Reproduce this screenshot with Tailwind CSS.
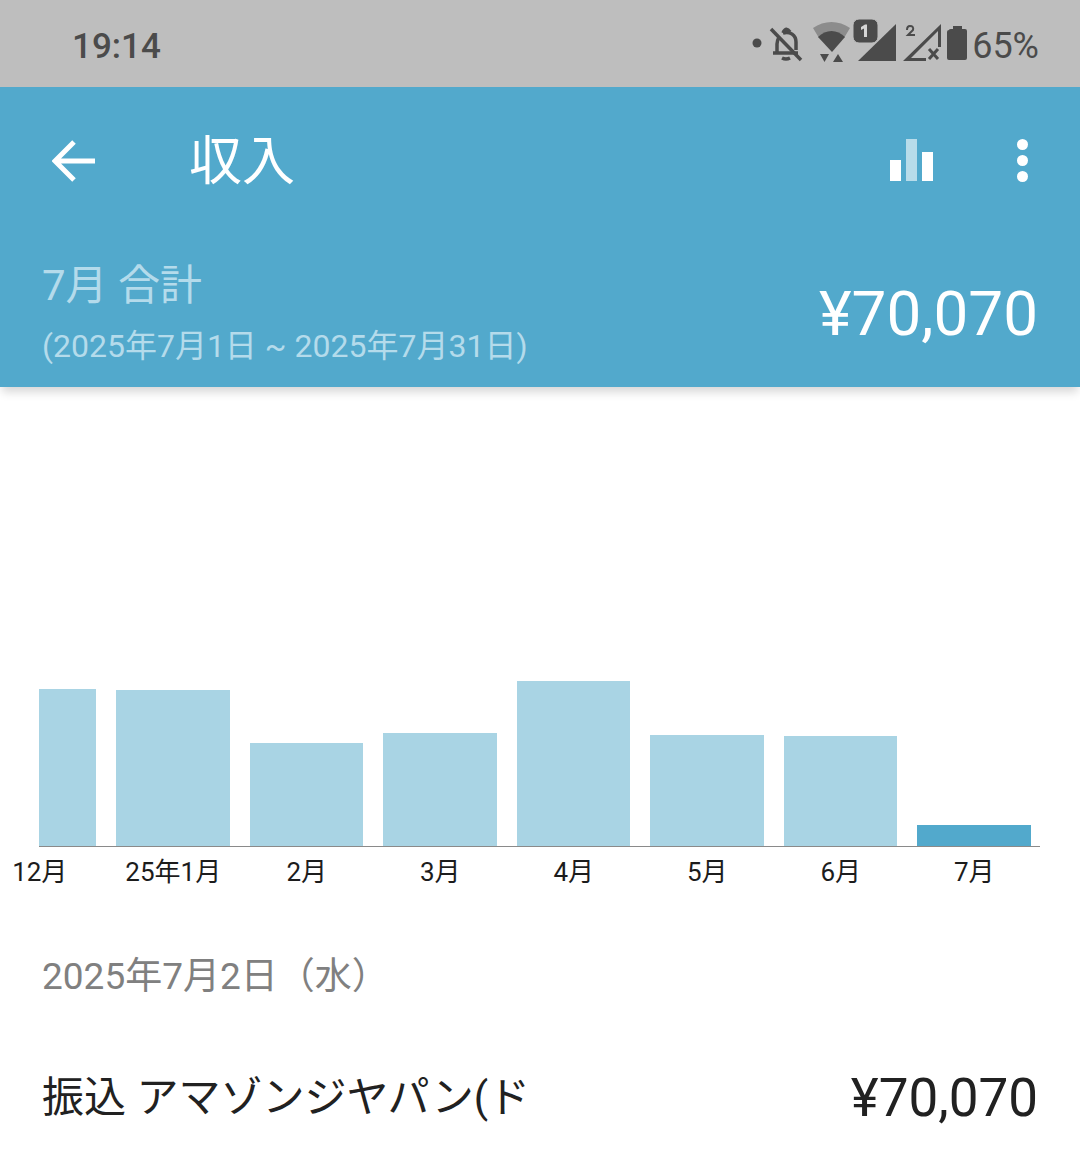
<!DOCTYPE html>
<html lang="ja">
<head>
  <meta charset="UTF-8">
  <meta name="viewport" content="width=device-width, initial-scale=1.0" />
  <title>収入</title>
  <script src="https://cdn.jsdelivr.net/npm/@tailwindcss/browser@4"></script>
</head>
<body>
  <div class="w-[1080px] h-[1164px] overflow-hidden bg-white font-['Roboto','Noto_Sans_CJK_JP',sans-serif] flex flex-col">
    <!-- status bar -->
    <div class="h-[87px] bg-[#bebebe] flex items-center text-[#4b4b4b] pl-[72px] pr-[41px]">
      <span class="text-[35px] font-medium leading-none mt-[5px]">19:14</span>
      <div class="ml-auto flex items-center">
        <!-- viewBox uses screen coordinates -->
        <svg width="220" height="51" viewBox="750 18 220 51">
          <circle cx="757" cy="43" r="4.500" fill="#4b4b4b"/>
          <g fill="none" stroke="#4b4b4b" stroke-width="3.500">
            <path d="M771 29 L801 60"/>
            <path d="M773 53 H798 M777 53 V44 C777 41 778 39 779 37 M783 33 C790 31 796 35 796 42 V50"/>
            <path d="M782 58 Q786 60 790 58"/>
            <path d="M783 33 Q786 26 790 32"/>
          </g>
          <path d="M813 28 C824 20 839 20 850 28 L844 38 C836 33 827 33 819 38Z" fill="#8c8c8c"/>
          <path d="M818 37 C826 29 837 29 845 37 L832 52Z" fill="#4b4b4b"/>
          <path d="M820 54 H829 L824.500 62Z M833 62 H843 L838 54Z" fill="#4b4b4b"/>
          <path d="M896 24 V61 H858 Z" fill="#4b4b4b"/>
          <rect x="853" y="19" width="25" height="24" rx="6" fill="#4b4b4b" stroke="#bebebe" stroke-width="1"/>
          <path d="M861 27 L865 24.500 H867 V37 H864 V28.500 L861 30Z" fill="#d5d5d5"/>
          <path d="M903 61 L941 24 V61Z M911 58 H938 V31Z" fill="#4b4b4b" fill-rule="evenodd"/>
          <rect x="926" y="47" width="15" height="14" fill="#bebebe"/>
          <path d="M929 49 L938 59 M938 49 L929 59" stroke="#4b4b4b" stroke-width="3" fill="none"/>
          <path d="M907 30 Q907 26 910 26 Q914 26 913 30 L908 35 H915" stroke="#4b4b4b" stroke-width="2" fill="none"/>
          <path d="M949 30 Q949 29 951 29 H953 V26 H962 V29 H965 Q967 29 967 31 V58 Q967 60 965 60 H949 Q947 60 947 58 V32 Q947 30 949 30Z" fill="#4b4b4b"/>
        </svg>
        <span class="text-[36px] leading-none ml-[2px] mt-[5px]">65%</span>
      </div>
    </div>

    <!-- header -->
    <div class="h-[300px] bg-[#52a9cc] shadow-[0_7px_9px_-2px_rgba(0,0,0,0.16)] relative flex flex-col">
      <div class="h-[148px] flex items-center pl-[52px] pr-[52px]">
        <svg width="44" height="42" viewBox="0 0 44 42" fill="none" stroke="white" stroke-width="5">
          <path d="M43 21 H4 M22 2 L3 21 L22 40"/>
        </svg>
        <span class="ml-[93px] mt-[2px] text-[53px] leading-none text-white">収入</span>
        <div class="ml-auto flex items-center">
          <div class="flex items-end gap-[5px] h-[43px] w-[43px] mb-[4px]">
            <div class="w-[11px] h-[21px] bg-white"></div>
            <div class="w-[11px] h-[42px] bg-[#b8dcea]"></div>
            <div class="w-[11px] h-[29px] bg-white"></div>
          </div>
          <div class="ml-[84px] flex flex-col gap-[5px] mb-[2px]">
            <div class="w-[11px] h-[11px] rounded-full bg-white"></div>
            <div class="w-[11px] h-[11px] rounded-full bg-white"></div>
            <div class="w-[11px] h-[11px] rounded-full bg-white"></div>
          </div>
        </div>
      </div>
      <div class="flex items-start pl-[42px] pr-[42px]">
        <div class="text-[#b4dbeb]">
          <p class="text-[42px] leading-[50px] mt-[26px]">7月 合計</p>
          <p class="text-[32px] leading-[40px] mt-[15px]">(2025年7月1日 ~ 2025年7月31日)</p>
        </div>
        <span class="ml-auto text-[62px] leading-none text-white mt-[48px]">¥70,070</span>
      </div>
    </div>

    <!-- chart -->
    <div class="mt-[295px] pl-[39px] w-[1040px]">
      <div class="flex items-end gap-[20px] h-[165px] border-b border-[#8a8a8a]">
        <div class="w-[57px] h-[157px] bg-[#a9d4e4]"></div>
        <div class="w-[114px] h-[156px] bg-[#a9d4e4]"></div>
        <div class="w-[113px] h-[103px] bg-[#a9d4e4]"></div>
        <div class="w-[114px] h-[113px] bg-[#a9d4e4]"></div>
        <div class="w-[113px] h-[165px] bg-[#a9d4e4]"></div>
        <div class="w-[114px] h-[111px] bg-[#a9d4e4]"></div>
        <div class="w-[113px] h-[110px] bg-[#a9d4e4]"></div>
        <div class="w-[114px] h-[21px] bg-[#52a9cc]"></div>
      </div>
      <div class="flex w-[1080px] ml-[-66px] mt-[8px] text-[26px] leading-[34px] text-[#1c1c1c] text-center">
        <span class="w-[133.500px]">12月</span>
        <span class="w-[133.500px]">25年1月</span>
        <span class="w-[133.500px]">2月</span>
        <span class="w-[133.500px]">3月</span>
        <span class="w-[133.500px]">4月</span>
        <span class="w-[133.500px]">5月</span>
        <span class="w-[133.500px]">6月</span>
        <span class="w-[133.500px]">7月</span>
      </div>
    </div>

    <!-- list -->
    <p class="mt-[64px] pl-[42px] text-[37px] leading-[48px] text-[#808080]">2025年7月2日（水）</p>
    <div class="mt-[67px] flex items-center pl-[42px] pr-[42px] text-[#212121] h-[60px]">
      <span class="text-[42px] leading-none">振込 アマゾンジヤパン(ド</span>
      <span class="ml-auto text-[53px] leading-none">¥70,070</span>
    </div>
  </div>
</body>
</html>
